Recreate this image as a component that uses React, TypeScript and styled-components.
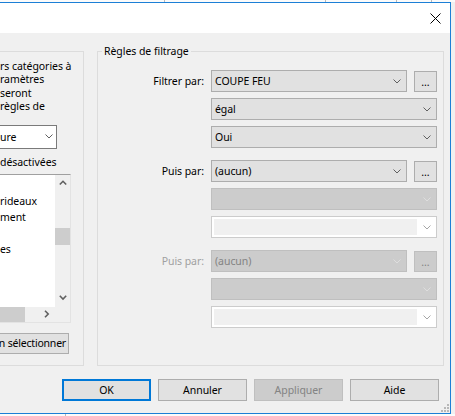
import React from "react";
import styled, { createGlobalStyle } from "styled-components";

const Global = createGlobalStyle`
  html, body { margin: 0; padding: 0; background: #f0f0f0; }
  body { font-family: "Noto Sans", "Segoe UI", sans-serif; font-size: 10.5px; letter-spacing: -0.05px; color: #000; }
  * { box-sizing: border-box; }
`;

const Page = styled.div`
  width: 455px;
  height: 416px;
  overflow: hidden;
  display: flex;
  flex-direction: column;
  background: #f0f0f0;
`;

const BehindStrip = styled.div<{ $h: number }>`
  flex: none;
  height: ${(p) => p.$h}px;
  display: flex;
  background: #fbfbfb;
`;

const BehindCell = styled.div<{ $w: number }>`
  flex: none;
  width: ${(p) => p.$w}px;
  border-right: 1px solid #b9b9b9;
`;

const DialogRow = styled.div`
  flex: none;
  height: 412px;
  display: flex;
`;

const Dialog = styled.div`
  position: relative;
  flex: none;
  width: 451px;
  height: 412px;
  border: 1px solid #1c7fd6;
  border-left: none;
  display: flex;
  flex-direction: column;
  background: #f0f0f0;
`;

const TitleBar = styled.div`
  flex: none;
  height: 30px;
  background: #fff;
  display: flex;
  align-items: center;
  justify-content: flex-end;
  padding-right: 9px;
`;

const Body = styled.div`
  flex: 1;
  display: flex;
  flex-direction: column;
  padding: 18px 6px 0 0;
`;

const Groups = styled.div`
  display: flex;
  gap: 13px;
  height: 315px;
`;

const LeftGroup = styled.div`
  flex: none;
  width: 84px;
  border: 1px solid #dcdcdc;
  border-left: none;
  display: flex;
  flex-direction: column;
  overflow: hidden;
  white-space: nowrap;
`;

const RightGroup = styled.div`
  position: relative;
  flex: 1;
  border: 1px solid #dcdcdc;
  padding: 18px 6px 0 0;
  display: flex;
  flex-direction: column;
  gap: 12px;
`;

const Legend = styled.div`
  position: absolute;
  top: -9px;
  left: 4px;
  padding: 0 2px;
  line-height: 16px;
  background: #f0f0f0;
`;

const TextBlock = styled.div`
  margin-top: 8px;
  line-height: 13.4px;
`;

const SelectBox = styled.div`
  margin-top: 11px;
  width: 57px;
  height: 24px;
  background: #fff;
  border: 1px solid #7a7a7a;
  border-left: none;
  display: flex;
  align-items: center;
  justify-content: space-between;
  padding-right: 3px;
`;

const CheckLine = styled.div`
  margin-top: 5px;
  line-height: 16px;
`;

const ListBox = styled.div`
  margin-top: 4px;
  width: 71px;
  height: 149px;
  border: 1px solid #e3e3e3;
  border-top-color: #a0a0a0;
  border-left: none;
  display: grid;
  grid-template-columns: 55px 15px;
  grid-template-rows: 132px 15px;
`;

const ListItems = styled.div`
  background: #fff;
  padding-top: 2px;
  overflow: hidden;
`;

const ListItem = styled.div`
  height: 16px;
  line-height: 16px;
`;

const VScroll = styled.div`
  background: #f0f0f0;
  display: flex;
  flex-direction: column;
`;

const ArrowBox = styled.div<{ $w: number; $h: number }>`
  flex: none;
  width: ${(p) => p.$w}px;
  height: ${(p) => p.$h}px;
  display: flex;
  align-items: center;
  justify-content: center;
`;

const Track = styled.div<{ $dir: "v" | "h" }>`
  flex: 1;
  display: flex;
  flex-direction: ${(p) => (p.$dir === "v" ? "column" : "row")};
`;

const Thumb = styled.div<{ $offset: number; $size: number; $dir: "v" | "h" }>`
  flex: none;
  background: #cdcdcd;
  ${(p) =>
    p.$dir === "v"
      ? `margin-top:${p.$offset}px; height:${p.$size}px; width:100%;`
      : `margin-left:${p.$offset}px; width:${p.$size}px; height:100%;`}
`;

const HScroll = styled.div`
  background: #f0f0f0;
  display: flex;
`;

const Corner = styled.div`
  background: #f0f0f0;
`;

const LeftButton = styled.div`
  margin-top: 10px;
  width: 69px;
  height: 21px;
  background: #e1e1e1;
  border: 1px solid #adadad;
  border-left: none;
  display: flex;
  align-items: center;
  justify-content: flex-end;
  padding-right: 2px;
  letter-spacing: -0.2px;
`;

const Block = styled.div`
  display: flex;
  flex-direction: column;
  gap: 6px;
`;

const Row = styled.div`
  display: flex;
  gap: 7px;
  height: 22px;
`;

const Label = styled.div<{ $disabled?: boolean }>`
  flex: none;
  width: 106px;
  text-align: right;
  line-height: 22px;
  color: ${(p) => (p.$disabled ? "#a0a0a0" : "#000")};
`;

const Field = styled.div`
  flex: none;
  width: 226px;
  display: flex;
  gap: 7px;
`;

type ComboVariant = "normal" | "disabled";

const Combo = styled.div<{ $variant: ComboVariant }>`
  flex: 1;
  height: 22px;
  border: 1px solid ${(p) => (p.$variant === "normal" ? "#adadad" : "#bfbfbf")};
  background: ${(p) => (p.$variant === "normal" ? "#e1e1e1" : "#cccccc")};
  color: ${(p) => (p.$variant === "normal" ? "#000" : "#838383")};
  display: flex;
  align-items: center;
  justify-content: space-between;
  padding: 0 5px 0 3px;
`;

const EditCombo = styled.div`
  flex: 1;
  height: 22px;
  border: 1px solid #cccccc;
  background: #fff;
  padding: 2px 0 2px 2px;
  display: flex;
`;

const EditArea = styled.div`
  flex: 1;
  background: #f0f0f0;
`;

const EditArrow = styled.div`
  flex: none;
  width: 19px;
  display: flex;
  align-items: center;
  justify-content: center;
`;

const Ellipsis = styled.div<{ $disabled?: boolean }>`
  flex: none;
  width: 23px;
  height: 21px;
  margin-top: 1px;
  border: 1px solid ${(p) => (p.$disabled ? "#bfbfbf" : "#adadad")};
  background: ${(p) => (p.$disabled ? "#cccccc" : "#e1e1e1")};
  color: ${(p) => (p.$disabled ? "#838383" : "#000")};
  display: flex;
  align-items: center;
  justify-content: center;
  line-height: 1;
  padding-top: 1px;
`;

const ButtonRow = styled.div`
  margin-top: 13px;
  display: flex;
  justify-content: flex-end;
  gap: 7px;
  padding-right: 5px;
`;

const Button = styled.div<{ $primary?: boolean; $disabled?: boolean }>`
  width: 89px;
  height: 22px;
  display: flex;
  align-items: center;
  justify-content: center;
  background: ${(p) => (p.$disabled ? "#cccccc" : "#e1e1e1")};
  border: ${(p) =>
    p.$primary ? "2px solid #0078d7" : p.$disabled ? "1px solid #bfbfbf" : "1px solid #adadad"};
  color: ${(p) => (p.$disabled ? "#838383" : "#000")};
`;

const Grip = styled.svg`
  position: absolute;
  right: 1px;
  bottom: 1px;
`;

const Chevron = ({ color = "#606060" }: { color?: string }) => (
  <svg width="8" height="5" viewBox="0 0 8 5">
    <polyline points="0.5,0.5 4,4 7.5,0.5" fill="none" stroke={color} strokeWidth="1" />
  </svg>
);

const ScrollArrow = ({ dir }: { dir: "up" | "down" | "right" }) => {
  const pts =
    dir === "up" ? "0.8,4.5 4,1.3 7.2,4.5" : dir === "down" ? "0.8,0.8 4,4 7.2,0.8" : "1,0.8 4.2,4 1,7.2";
  const w = dir === "right" ? 6 : 8;
  const h = dir === "right" ? 8 : 6;
  return (
    <svg width={w} height={h} viewBox={`0 0 ${w} ${h}`}>
      <polyline points={pts} fill="none" stroke="#606060" strokeWidth="1.6" />
    </svg>
  );
};

const CloseIcon = () => (
  <svg width="11" height="11" viewBox="0 0 11 11">
    <path d="M0.5 0.5 L10.5 10.5 M10.5 0.5 L0.5 10.5" stroke="#000" strokeWidth="1" />
  </svg>
);

export default function App() {
  return (
    <Page>
      <Global />
      <BehindStrip $h={2}>
        <BehindCell $w={165} />
        <BehindCell $w={161} />
        <BehindCell $w={71} />
        <BehindCell $w={35} />
      </BehindStrip>
      <DialogRow>
        <Dialog>
          <TitleBar>
            <CloseIcon />
          </TitleBar>
          <Body>
            <Groups>
              <LeftGroup>
                <TextBlock>
                  <div>rs catégories à</div>
                  <div>ramètres</div>
                  <div>seront</div>
                  <div>règles de</div>
                </TextBlock>
                <SelectBox>
                  <span>ure</span>
                  <Chevron />
                </SelectBox>
                <CheckLine>désactivées</CheckLine>
                <ListBox>
                  <ListItems>
                    <ListItem></ListItem>
                    <ListItem>rideaux</ListItem>
                    <ListItem>ment</ListItem>
                    <ListItem></ListItem>
                    <ListItem>es</ListItem>
                  </ListItems>
                  <VScroll>
                    <ArrowBox $w={15} $h={17}>
                      <ScrollArrow dir="up" />
                    </ArrowBox>
                    <Track $dir="v">
                      <Thumb $dir="v" $offset={36} $size={17} />
                    </Track>
                    <ArrowBox $w={15} $h={17}>
                      <ScrollArrow dir="down" />
                    </ArrowBox>
                  </VScroll>
                  <HScroll>
                    <Track $dir="h">
                      <Thumb $dir="h" $offset={0} $size={25} />
                    </Track>
                    <ArrowBox $w={17} $h={15}>
                      <ScrollArrow dir="right" />
                    </ArrowBox>
                  </HScroll>
                  <Corner />
                </ListBox>
                <LeftButton>n sélectionner</LeftButton>
              </LeftGroup>
              <RightGroup>
                <Legend>Règles de filtrage</Legend>
                <Block>
                  <Row>
                    <Label>Filtrer par:</Label>
                    <Field>
                      <Combo $variant="normal">
                        <span>COUPE FEU</span>
                        <Chevron />
                      </Combo>
                      <Ellipsis>...</Ellipsis>
                    </Field>
                  </Row>
                  <Row>
                    <Label />
                    <Field>
                      <Combo $variant="normal">
                        <span>égal</span>
                        <Chevron />
                      </Combo>
                    </Field>
                  </Row>
                  <Row>
                    <Label />
                    <Field>
                      <Combo $variant="normal">
                        <span>Oui</span>
                        <Chevron />
                      </Combo>
                    </Field>
                  </Row>
                </Block>
                <Block>
                  <Row>
                    <Label>Puis par:</Label>
                    <Field>
                      <Combo $variant="normal">
                        <span>(aucun)</span>
                        <Chevron />
                      </Combo>
                      <Ellipsis>...</Ellipsis>
                    </Field>
                  </Row>
                  <Row>
                    <Label />
                    <Field>
                      <Combo $variant="disabled">
                        <span />
                        <Chevron color="#dedede" />
                      </Combo>
                    </Field>
                  </Row>
                  <Row>
                    <Label />
                    <Field>
                      <EditCombo>
                        <EditArea />
                        <EditArrow>
                          <Chevron color="#a6a6a6" />
                        </EditArrow>
                      </EditCombo>
                    </Field>
                  </Row>
                </Block>
                <Block>
                  <Row>
                    <Label $disabled>Puis par:</Label>
                    <Field>
                      <Combo $variant="disabled">
                        <span>(aucun)</span>
                        <Chevron color="#dedede" />
                      </Combo>
                      <Ellipsis $disabled>...</Ellipsis>
                    </Field>
                  </Row>
                  <Row>
                    <Label />
                    <Field>
                      <Combo $variant="disabled">
                        <span />
                        <Chevron color="#dedede" />
                      </Combo>
                    </Field>
                  </Row>
                  <Row>
                    <Label />
                    <Field>
                      <EditCombo>
                        <EditArea />
                        <EditArrow>
                          <Chevron color="#a6a6a6" />
                        </EditArrow>
                      </EditCombo>
                    </Field>
                  </Row>
                </Block>
              </RightGroup>
            </Groups>
            <ButtonRow>
              <Button $primary>OK</Button>
              <Button>Annuler</Button>
              <Button $disabled>Appliquer</Button>
              <Button>Aide</Button>
            </ButtonRow>
          </Body>
          <Grip width="8" height="8" viewBox="0 0 8 8">
            <rect x="6" y="0" width="2" height="2" fill="#b8b8b8" />
            <rect x="3" y="3" width="2" height="2" fill="#b8b8b8" />
            <rect x="6" y="3" width="2" height="2" fill="#b8b8b8" />
            <rect x="0" y="6" width="2" height="2" fill="#b8b8b8" />
            <rect x="3" y="6" width="2" height="2" fill="#b8b8b8" />
            <rect x="6" y="6" width="2" height="2" fill="#b8b8b8" />
          </Grip>
        </Dialog>
      </DialogRow>
      <BehindStrip $h={2}>
        <BehindCell $w={66} />
      </BehindStrip>
    </Page>
  );
}
